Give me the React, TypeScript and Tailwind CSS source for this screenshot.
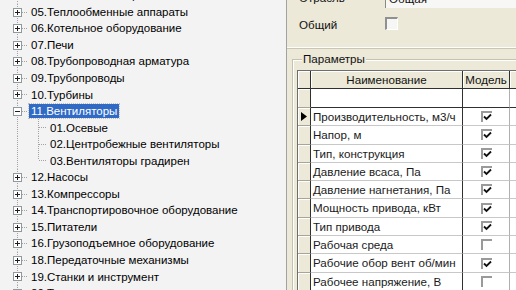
import React from "react";

const ROW_H = 16.55;

type TreeItem = { label: string; kind: "root" | "open" | "child" | "lastchild"; selected?: boolean };

const items: TreeItem[] = [
  { label: "04.Насосные станции", kind: "root" },
  { label: "05.Теплообменные аппараты", kind: "root" },
  { label: "06.Котельное оборудование", kind: "root" },
  { label: "07.Печи", kind: "root" },
  { label: "08.Трубопроводная арматура", kind: "root" },
  { label: "09.Трубопроводы", kind: "root" },
  { label: "10.Турбины", kind: "root" },
  { label: "11.Вентиляторы", kind: "open", selected: true },
  { label: "01.Осевые", kind: "child" },
  { label: "02.Центробежные вентиляторы", kind: "child" },
  { label: "03.Вентиляторы градирен", kind: "lastchild" },
  { label: "12.Насосы", kind: "root" },
  { label: "13.Компрессоры", kind: "root" },
  { label: "14.Транспортировочное оборудование", kind: "root" },
  { label: "15.Питатели", kind: "root" },
  { label: "16.Грузоподъемное оборудование", kind: "root" },
  { label: "18.Передаточные механизмы", kind: "root" },
  { label: "19.Станки и инструмент", kind: "root" },
  { label: "20.Технологические линии", kind: "root" },
];

function Expander({ open, mid }: { open: boolean; mid: number }) {
  return (
    <g>
      <rect x={13.5} y={mid - 4} width={8} height={8} fill="#ffffff" stroke="#8e9a9c" />
      <line x1={15} x2={20} y1={mid} y2={mid} stroke="#1e1e1e" />
      {!open && <line x1={17.5} x2={17.5} y1={mid - 2.5} y2={mid + 2.5} stroke="#1e1e1e" />}
    </g>
  );
}

function Gutter({ kind }: { kind: TreeItem["kind"] }) {
  const h = ROW_H;
  const mid = Math.round(h / 2);
  const isChild = kind === "child" || kind === "lastchild";
  const w = isChild ? 48 : 29;
  const dot = { stroke: "#a3a3a3", strokeDasharray: "1 1" };
  return (
    <svg width={w} height={h} className="shrink-0 block">
      <line x1={17.5} x2={17.5} y1={0} y2={h} {...dot} />
      {!isChild && <line x1={22} x2={28} y1={mid + 0.5} y2={mid + 0.5} {...dot} />}
      {!isChild && <Expander open={kind === "open"} mid={mid + 0.5} />}
      {isChild && (
        <>
          <line x1={38.5} x2={38.5} y1={0} y2={kind === "lastchild" ? mid : h} {...dot} />
          <line x1={39} x2={47} y1={mid + 0.5} y2={mid + 0.5} {...dot} />
        </>
      )}
    </svg>
  );
}

function TreeRow({ item }: { item: TreeItem }) {
  return (
    <div className="flex items-center h-[16.55px] whitespace-nowrap">
      <Gutter kind={item.kind} />
      <span
        className={
          item.selected
            ? "bg-[#316ac5] text-white px-[2px] h-[14px] leading-[14px] outline-1 outline-dotted outline-[#c0c0c0]"
            : "text-black px-[2px] h-[14px] leading-[14px]"
        }
      >
        {item.label}
      </span>
    </div>
  );
}

function GridCheck({ checked }: { checked: boolean }) {
  return (
    <div className="w-[11px] h-[11px] border-t-2 border-l-2 border-[#9a9a9a] bg-white flex items-center justify-center">
      {checked && (
        <svg width="9" height="9" viewBox="0 0 9 9" className="block">
          <path d="M1 3.5 L3.5 6 L8 1.5" fill="none" stroke="#111" strokeWidth="1.8" />
        </svg>
      )}
    </div>
  );
}

const params: { name: string; checked: boolean }[] = [
  { name: "Производительность, м3/ч", checked: true },
  { name: "Напор, м", checked: true },
  { name: "Тип, конструкция", checked: true },
  { name: "Давление всаса, Па", checked: true },
  { name: "Давление нагнетания, Па", checked: true },
  { name: "Мощность привода, кВт", checked: true },
  { name: "Тип привода", checked: true },
  { name: "Рабочая среда", checked: false },
  { name: "Рабочие обор вент об/мин", checked: true },
  { name: "Рабочее напряжение, В", checked: false },
];

function DataRow({ name, checked, current }: { name: string; checked: boolean; current?: boolean }) {
  return (
    <div className="flex h-[18.3px] shrink-0">
      <div className="w-[13px] shrink-0 bg-[#ece9d8] border-r border-b border-r-[#303030] border-b-[#a8a596] shadow-[inset_1px_1px_0_#ffffff] flex items-center justify-center">
        {current && (
          <svg width="6" height="9" viewBox="0 0 6 9" className="block">
            <path d="M0 0 L6 4.5 L0 9 Z" fill="#000" />
          </svg>
        )}
      </div>
      <div className="w-[152px] shrink-0 bg-white border-r border-b border-r-[#303030] border-b-[#c8c8c8] pl-[2px] flex items-center text-[#1a1a1a] whitespace-nowrap overflow-hidden">
        {name}
      </div>
      <div className="w-[47px] shrink-0 bg-white border-r border-b border-r-[#b0b0b0] border-b-[#c8c8c8] flex items-center justify-center">
        <GridCheck checked={checked} />
      </div>
      <div className="flex-1 bg-white border-b border-b-[#c8c8c8]" />
    </div>
  );
}

export default function App() {
  return (
    <div
      className="w-[516px] h-[290px] overflow-hidden flex text-[11.5px]"
      style={{ fontFamily: '"Liberation Sans", Arial, sans-serif' }}
    >
      {/* Tree */}
      <div className="w-[287px] shrink-0 h-full bg-[#f3f3f3] border-r border-[#a2a2a2] overflow-hidden">
        <div className="mt-[-13px]">
          {items.map((it, i) => (
            <TreeRow key={i} item={it} />
          ))}
        </div>
      </div>

      {/* Right panel */}
      <div className="flex-1 h-full bg-[#ece9d8] flex flex-col overflow-hidden text-[11.6px]">
        <div className="h-[48px] shrink-0 border-b border-[#fdfdfb] shadow-[0_1px_0_#c9c6b6] flex flex-col">
          <div className="flex items-center h-[20px] mt-[-12px] shrink-0">
            <div className="w-[98px] pl-[12px] text-[#111]">Отрасль</div>
            <div className="flex-1 h-[20px] bg-[#f7f7f5] border-t border-l border-[#8a8a80] pl-[3px] flex items-center text-[#111]">
              Общая
            </div>
          </div>
          <div className="flex items-center h-[13px] mt-[9px] shrink-0">
            <div className="w-[98px] pl-[12px] text-[#111] pt-[2px]">Общий</div>
            <div className="w-[13px] h-[13px] border-t-2 border-l-2 border-[#909090] border-r border-b border-r-white border-b-white bg-[#f6f6f4]" />
          </div>
        </div>

        <div className="relative ml-[5px] mt-[11px] flex-1 border-t border-l border-[#c5c2b2] shadow-[inset_1px_1px_0_#ffffff] pl-[4px] pt-[10px]">
          <div className="absolute -top-[8px] left-[9px] bg-[#ece9d8] px-[1px] leading-[14px] text-[#111]">
            Параметры
          </div>
          <div className="border-t border-l border-[#6e6e6e] flex flex-col h-full">
            <div className="flex h-[18px] shrink-0">
              <div className="w-[13px] shrink-0 bg-[#ece9d8] border-r border-b border-[#303030] shadow-[inset_1px_1px_0_#ffffff]" />
              <div className="w-[152px] shrink-0 bg-[#ece9d8] border-r border-b border-[#303030] shadow-[inset_1px_1px_0_#ffffff] flex items-center justify-center text-[#111]">
                Наименование
              </div>
              <div className="w-[47px] shrink-0 bg-[#ece9d8] border-r border-b border-[#303030] shadow-[inset_1px_1px_0_#ffffff] flex items-center justify-center text-[#111]">
                Модель
              </div>
              <div className="flex-1 bg-[#ece9d8] border-b border-[#303030] shadow-[inset_1px_1px_0_#ffffff]" />
            </div>
            <div className="flex h-[19px] shrink-0">
              <div className="w-[13px] shrink-0 bg-[#ece9d8] border-r border-b border-r-[#303030] border-b-[#a8a596] shadow-[inset_1px_1px_0_#ffffff]" />
              <div className="w-[152px] shrink-0 bg-white border-r border-b border-r-[#303030] border-b-[#303030]" />
              <div className="w-[47px] shrink-0 bg-white border-r border-b border-r-[#b0b0b0] border-b-[#303030]" />
              <div className="flex-1 bg-white border-b border-b-[#303030]" />
            </div>
            {params.map((p, i) => (
              <DataRow key={i} name={p.name} checked={p.checked} current={i === 0} />
            ))}
          </div>
        </div>
      </div>
    </div>
  );
}
